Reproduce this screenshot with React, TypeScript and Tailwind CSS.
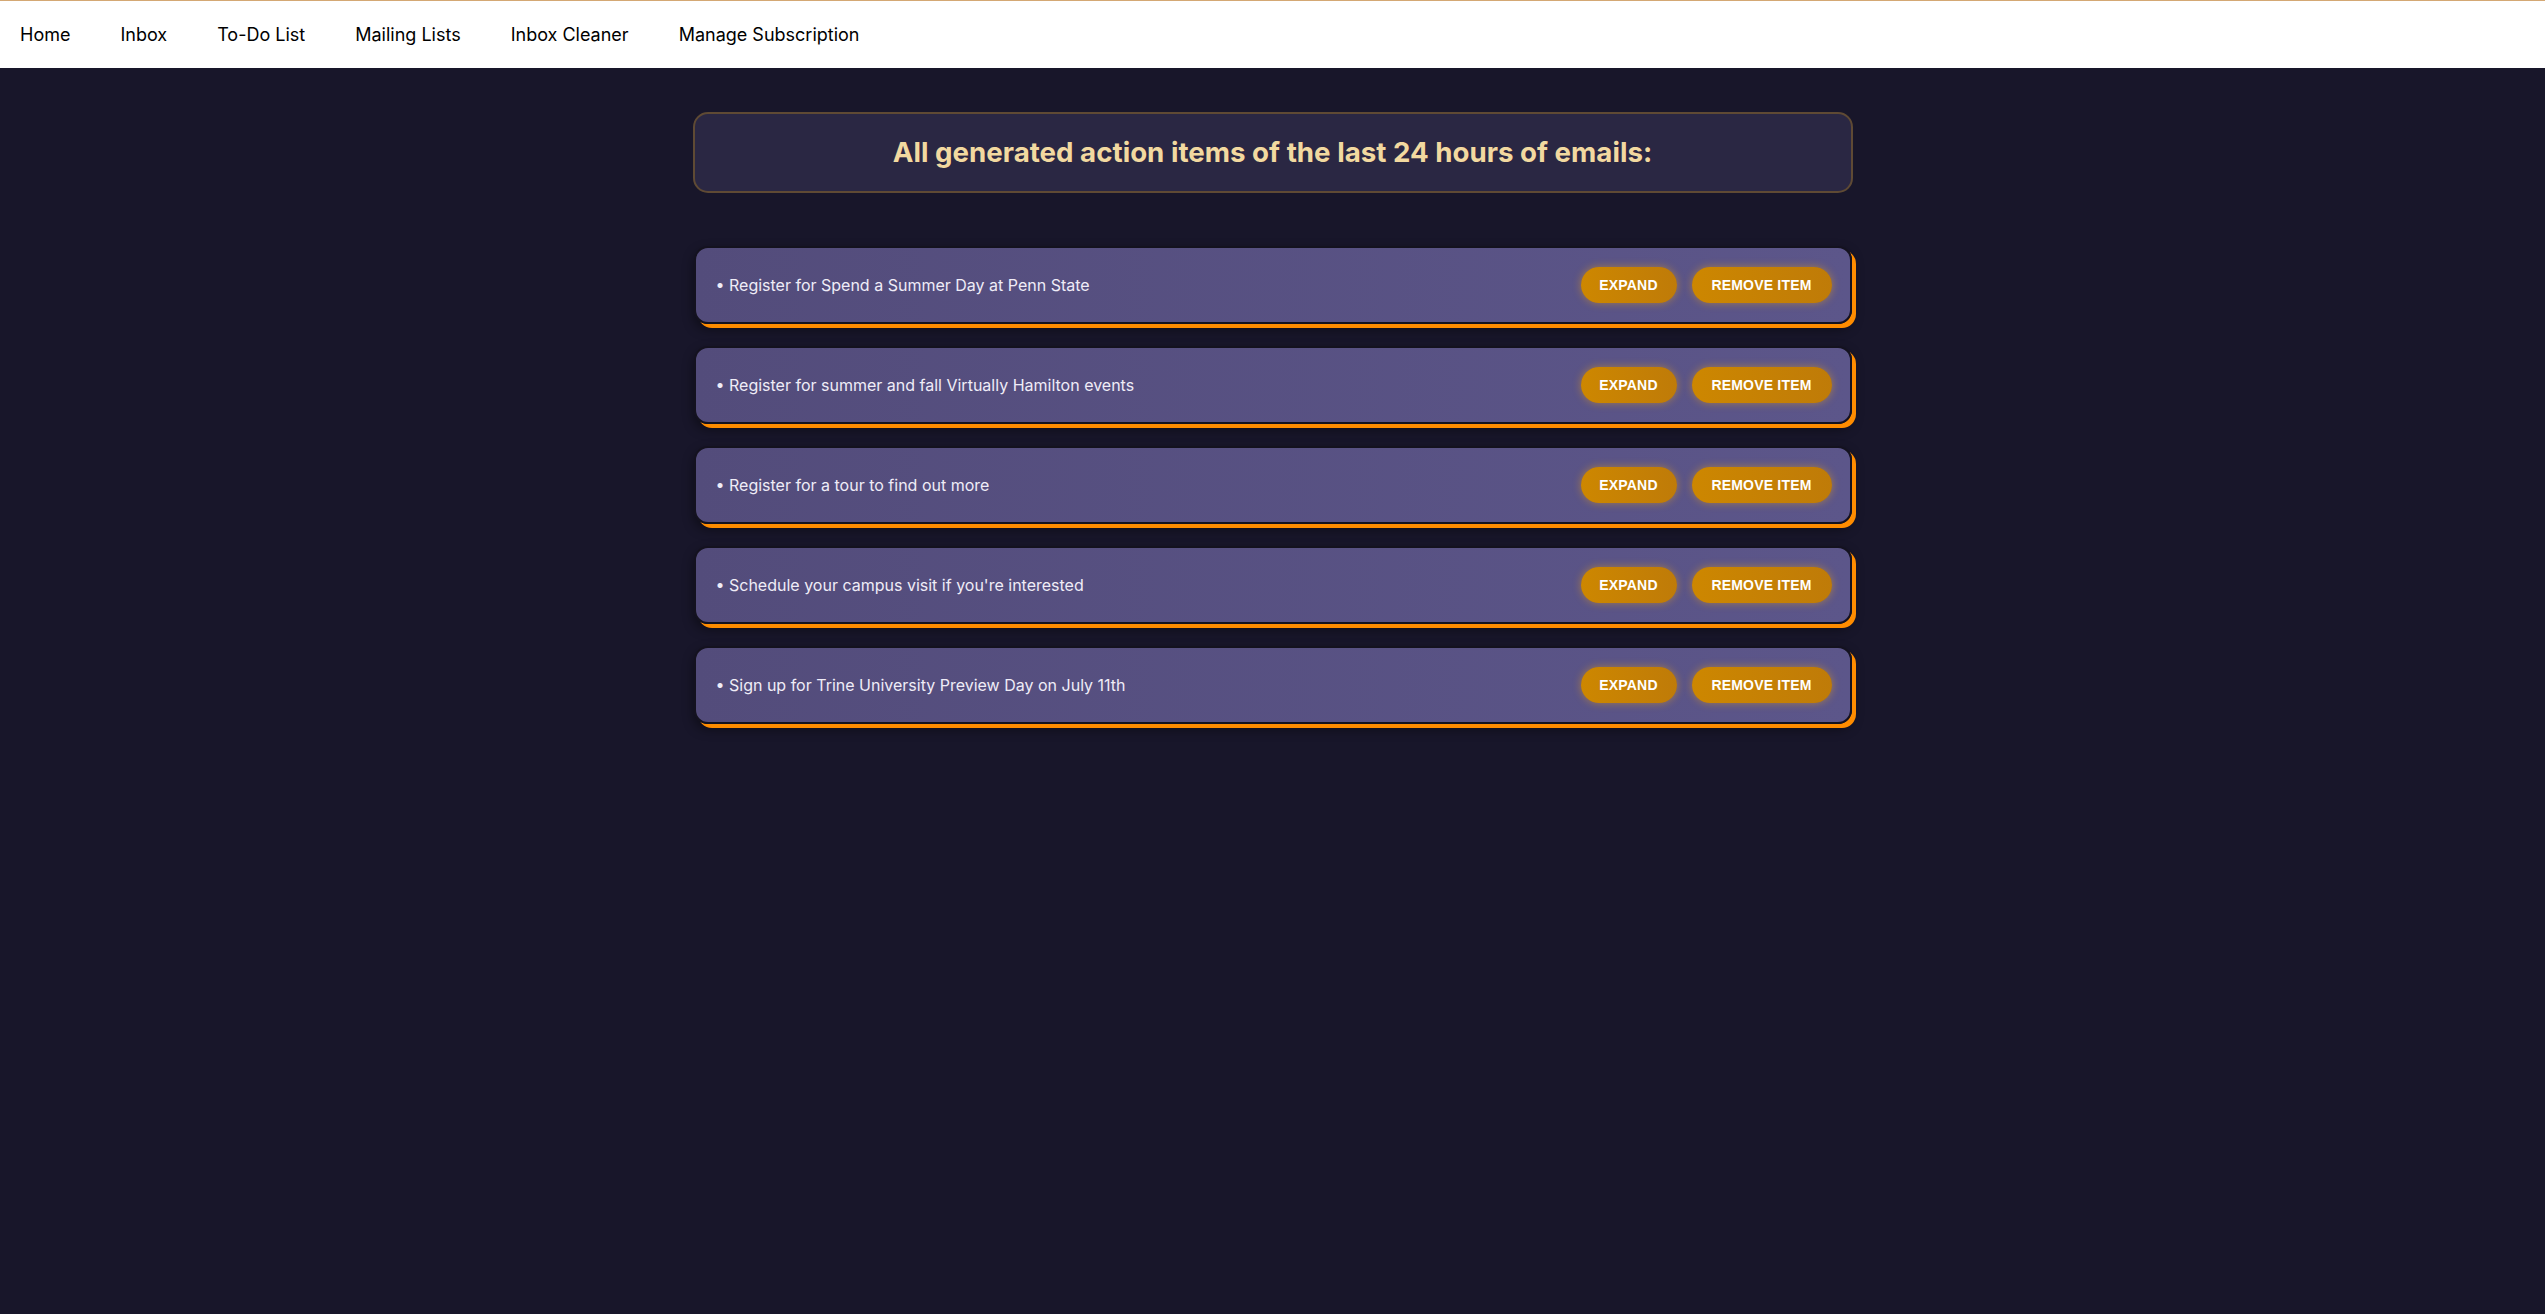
const navItems = ['Home', 'Inbox', 'To-Do List', 'Mailing Lists', 'Inbox Cleaner', 'Manage Subscription'];

const actionItems = [
  'Register for Spend a Summer Day at Penn State',
  'Register for summer and fall Virtually Hamilton events',
  'Register for a tour to find out more',
  "Schedule your campus visit if you're interested",
  'Sign up for Trine University Preview Day on July 11th',
];

const ActionButton = ({ label, width }: { label: string; width: string }) => (
  <button
    type="button"
    className={`${width} flex h-[36px] items-center justify-center rounded-full bg-gradient-to-r from-[#cd8700] to-[#bf7b08] font-['Liberation_Sans',Arial,sans-serif] text-[14px] font-bold uppercase tracking-[0.2px] text-white shadow-[0_0_9px_rgba(255,170,0,0.45)]`}
  >
    {label}
  </button>
);

const ActionCard = ({ text }: { text: string }) => (
  <div className="flex h-[78px] w-[1158px] items-center justify-between rounded-[14px] border-2 border-[#14121f] bg-gradient-to-r from-[#534c7b] to-[#5c568a] pl-[20px] pr-[18px] shadow-[4px_4px_0_#ff8c00,0_5px_12px_rgba(0,0,0,0.45)]">
    <span className="text-[16px] text-[#efecf7]">• {text}</span>
    <div className="flex items-center gap-[15px]">
      <ActionButton label="Expand" width="w-[96px]" />
      <ActionButton label="Remove Item" width="w-[140px]" />
    </div>
  </div>
);

const App = () => {
  return (
    <div className="min-h-screen bg-[#18162a] font-['Inter',sans-serif]">
      <nav className="flex h-[68px] items-center gap-[50px] border-t border-[#d4a874] bg-white pl-[20px] text-[18px] text-black">
        {navItems.map((item) => (
          <a key={item} href="#" className="leading-none">
            {item}
          </a>
        ))}
      </nav>
      <main className="flex flex-col items-center pt-[44px]">
        <div className="flex h-[81px] w-[1160px] items-center justify-center rounded-[15px] border-2 border-[#5f4a34] bg-[#2a2743]">
          <h1 className="text-[27.7px] font-bold text-[#f2d9a0]">
            All generated action items of the last 24 hours of emails:
          </h1>
        </div>
        <div className="mt-[53px] flex flex-col gap-[22px]">
          {actionItems.map((item) => (
            <ActionCard key={item} text={item} />
          ))}
        </div>
      </main>
    </div>
  );
};

export default App;
